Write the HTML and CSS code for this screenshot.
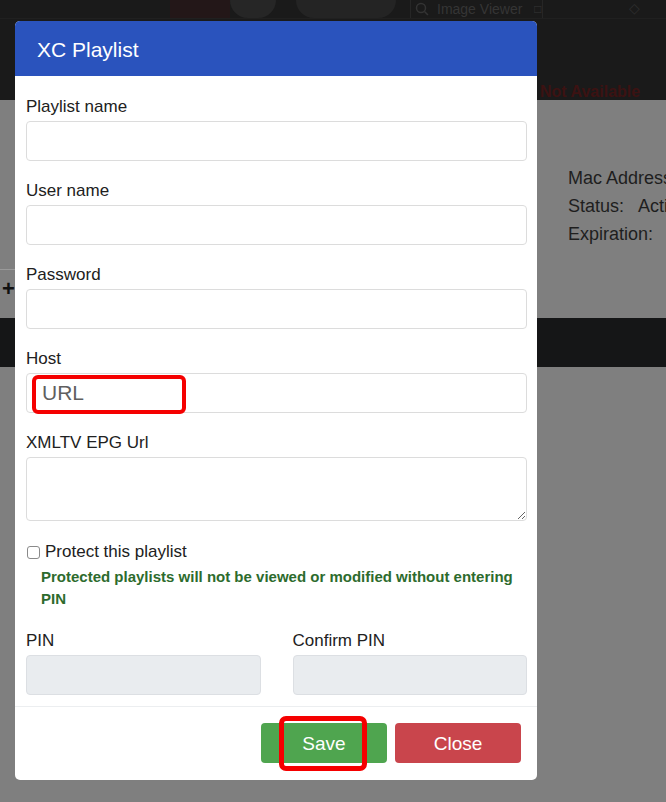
FILE: index.html
```html
<!DOCTYPE html>
<html>
<head>
    <title>XC Playlist</title>
    <link rel="stylesheet" href="styles.css">
</head>
<body>
    <div class="app">
        <div class="topbar">
            <div class="toolbar">
                <div class="thumbs">
                    <div class="thumb thumb-red"></div>
                    <div class="thumb thumb-round"></div>
                    <div class="thumb thumb-round thumb-big"></div>
                </div>
                <div class="viewer-tab">
                    <svg width="14" height="14" viewBox="0 0 14 14"><circle cx="6" cy="6" r="4.5" fill="none" stroke="#333" stroke-width="1.5"/><path d="M9.5 9.5 L13 13" stroke="#333" stroke-width="1.5"/></svg>
                    <span>Image Viewer</span>
                    <span class="tab-x">&#9633;</span>
                </div>
                <div class="viewer-rest">&#9671;</div>
            </div>
            <div class="not-available">Not Available</div>
        </div>
        <div class="page-main">
            <div class="tool-box">+</div>
            <div class="device-info">
                <div>Mac Address:</div>
                <div>Status:&nbsp;&nbsp; Active</div>
                <div>Expiration:</div>
            </div>
        </div>
        <div class="dark-band"></div>
    </div>

    <div class="modal">
        <div class="modal-header">XC Playlist</div>
        <div class="modal-body">
            <div class="field">
                <label>Playlist name</label>
                <input type="text" class="form-input">
            </div>
            <div class="field">
                <label>User name</label>
                <input type="text" class="form-input">
            </div>
            <div class="field">
                <label>Password</label>
                <input type="text" class="form-input">
            </div>
            <div class="field">
                <label>Host</label>
                <div class="host-wrap">
                    <input type="text" class="form-input host-input" placeholder="URL">
                    <div class="url-mark"></div>
                </div>
            </div>
            <div class="field field-epg">
                <label>XMLTV EPG Url</label>
                <textarea class="form-input epg-input"></textarea>
            </div>
            <div class="check-row">
                <input type="checkbox" class="check">
                <span>Protect this playlist</span>
            </div>
            <div class="protect-note">Protected playlists will not be viewed or modified without entering PIN</div>
            <div class="pin-row">
                <div>
                    <label>PIN</label>
                    <input type="text" class="form-input" disabled>
                </div>
                <div>
                    <label>Confirm PIN</label>
                    <input type="text" class="form-input" disabled>
                </div>
            </div>
        </div>
        <div class="modal-footer">
            <div class="save-wrap">
                <button class="btn btn-save">Save</button>
                <div class="save-mark"></div>
            </div>
            <button class="btn btn-close">Close</button>
        </div>
    </div>
</body>
</html>
```

FILE: styles.css
```css
body {
    margin: 0;
    width: 666px;
    height: 802px;
    overflow: hidden;
    background-color: #7f7f7f;
    font-family: "Liberation Sans", Arial, sans-serif;
    position: relative;
}
.topbar {
    height: 100px;
    background-color: #1a1a1a;
    position: relative;
}
.toolbar {
    display: flex;
    height: 18px;
    border-bottom: 1px solid #202020;
}
.thumbs {
    display: flex;
    width: 410px;
    padding-left: 170px;
    box-sizing: border-box;
}
.thumb {
    height: 18px;
}
.thumb-red {
    width: 60px;
    background-color: #231718;
}
.thumb-round {
    width: 46px;
    background-color: #262626;
    border-radius: 0 0 24px 24px;
}
.thumb-big {
    width: 100px;
    background-color: #242424;
    margin-left: 20px;
}
.viewer-tab {
    width: 133px;
    display: flex;
    align-items: center;
    gap: 8px;
    padding-left: 4px;
    box-sizing: border-box;
    border-left: 1px solid #262626;
    border-right: 1px solid #262626;
    color: #353535;
    font-size: 14px;
}
.tab-x {
    font-size: 12px;
    margin-left: 4px;
}
.viewer-rest {
    flex: 1;
    color: #2e2e2e;
    font-size: 14px;
    text-align: right;
    padding-right: 26px;
}
.not-available {
    position: absolute;
    left: 540px;
    top: 83px;
    color: #3c1212;
    font-size: 16px;
    font-weight: bold;
}
.page-main {
    height: 218px;
    position: relative;
    display: flex;
    justify-content: space-between;
}
.tool-box {
    align-self: flex-end;
    width: 15px;
    height: 49px;
    border-top: 1px solid #9a9a9a;
    box-sizing: border-box;
    color: #111;
    font-size: 22px;
    font-weight: bold;
    line-height: 38px;
    padding-left: 2px;
}
.device-info {
    width: 98px;
    padding-top: 64px;
    color: #1e1e1e;
    font-size: 18px;
    line-height: 28px;
    white-space: nowrap;
}
.dark-band {
    height: 49px;
    background-color: #151617;
}
.modal {
    position: absolute;
    left: 15px;
    top: 21px;
    width: 522px;
    background-color: #fff;
    border-radius: 5px;
    overflow: hidden;
}
.modal-header {
    height: 55px;
    box-sizing: border-box;
    padding-top: 2px;
    background-color: #2a53bd;
    color: #fff;
    font-size: 21px;
    display: flex;
    align-items: center;
    padding-left: 22px;
}
.modal-body {
    padding: 19px 10px 11px 11px;
    color: #212121;
}
label {
    display: block;
    font-size: 17px;
    line-height: 24px;
    margin-bottom: 2px;
}
.field {
    margin-bottom: 18px;
}
.field-epg {
    margin-bottom: 19px;
}
.form-input {
    display: block;
    width: 100%;
    height: 40px;
    box-sizing: border-box;
    border: 1px solid #dcdcdc;
    border-radius: 4px;
    background-color: #fff;
    font-family: inherit;
    margin: 0;
}
.form-input:disabled {
    background-color: #e9ecef;
    border-color: #dcdfe3;
}
.host-wrap {
    position: relative;
}
.host-input {
    padding-left: 15px;
    font-size: 21px;
}
.host-input::placeholder {
    color: #5f5f5f;
}
.url-mark {
    position: absolute;
    left: 6px;
    top: 2px;
    width: 154px;
    height: 39px;
    box-sizing: border-box;
    border: 4px solid #f50000;
    border-radius: 6px;
}
.epg-input {
    height: 64px;
    resize: vertical;
}
.check-row {
    display: flex;
    align-items: center;
    gap: 5px;
    font-size: 17px;
    line-height: 24px;
}
.check {
    appearance: none;
    width: 13px;
    height: 13px;
    margin: 0 0 0 1px;
    border: 1px solid #8a8a8a;
    border-radius: 3px;
    background-color: #fff;
}
.protect-note {
    margin-top: 2px;
    padding-left: 15px;
    color: #2d6b2d;
    font-size: 15px;
    font-weight: bold;
    line-height: 22px;
}
.pin-row {
    margin-top: 19px;
    display: grid;
    grid-template-columns: 1fr 1fr;
    gap: 32px;
}
.modal-footer {
    border-top: 1px solid #eceef0;
    padding: 16px 16px 17px;
    display: flex;
    justify-content: flex-end;
    gap: 8px;
}
.save-wrap {
    position: relative;
}
.btn {
    width: 126px;
    height: 40px;
    padding: 2px 0 0;
    border: none;
    border-radius: 4px;
    color: #fff;
    font-family: inherit;
    font-size: 19px;
    display: block;
}
.btn-save {
    background-color: #4fa54f;
}
.btn-close {
    background-color: #c9454c;
}
.save-mark {
    position: absolute;
    left: 18px;
    top: -7px;
    width: 88px;
    height: 55px;
    box-sizing: border-box;
    border: 5px solid #f50000;
    border-radius: 7px;
}
```
